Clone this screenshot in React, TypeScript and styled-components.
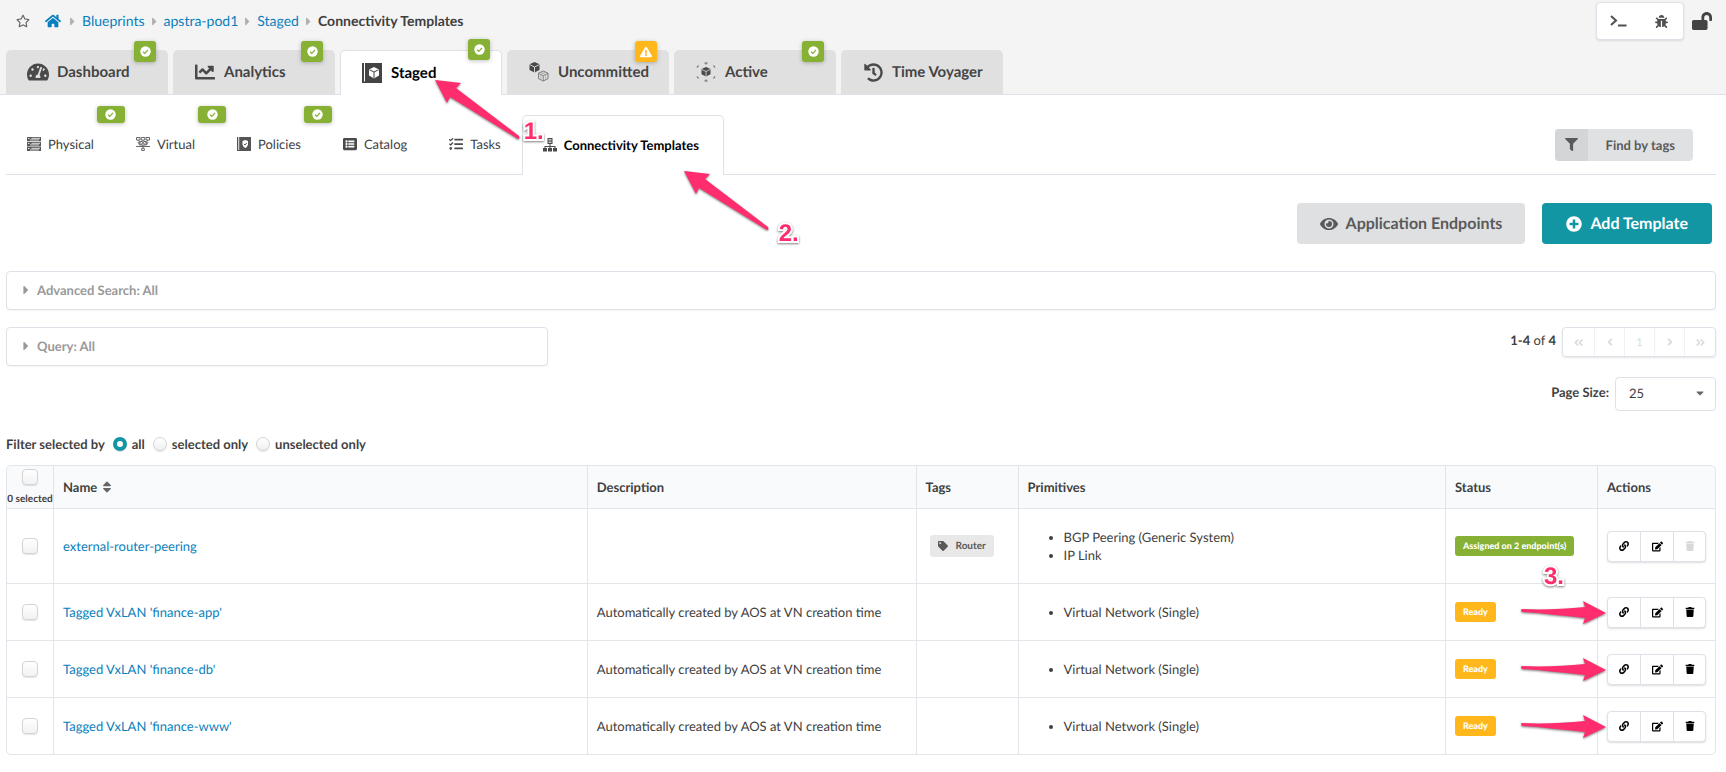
import React from "react";
import styled, { createGlobalStyle, css } from "styled-components";
import {
  FaAngleDoubleLeft,
  FaAngleDoubleRight,
  FaAngleLeft,
  FaAngleRight,
  FaBug,
  FaCaretDown,
  FaCaretRight,
  FaChartLine,
  FaEdit,
  FaExclamationTriangle,
  FaEye,
  FaFilter,
  FaHistory,
  FaHome,
  FaLink,
  FaListAlt,
  FaLockOpen,
  FaPlusCircle,
  FaRegStar,
  FaSort,
  FaTachometerAlt,
  FaTag,
  FaTasks,
  FaTrash,
} from "react-icons/fa";

const line = "#dfe1e8";
const cellLine = "#e2e5e9";
const ink = "#3f3f3f";
const link = "#0a7fbd";
const green = "#86b135";
const amber = "#ffb71b";
const teal = "#1296a4";
const pink = "#ff2d6d";

const GlobalStyle = createGlobalStyle`
  *, *::before, *::after { box-sizing: border-box; }
  body {
    margin: 0;
    background: #fff;
    color: ${ink};
    font: 13px/18px Lato, "Liberation Sans", sans-serif;
    text-rendering: geometricPrecision;
  }
  a { color: ${link}; text-decoration: none; }
  button, select { font-family: inherit; text-rendering: inherit; cursor: pointer; }
  svg { flex: none; display: block; }
`;

/* ---------- header ---------- */

const Header = styled.header`
  background: #f4f4f4;
  border-bottom: 1px solid ${line};
  padding: 2px 13px 0 6px;
`;

const TopBar = styled.div`
  display: flex;
  align-items: center;
  height: 38px;
`;

const Breadcrumb = styled.nav`
  display: flex;
  align-items: center;
  flex: 1;
  gap: 3px;
  padding-left: 10px;
  font-size: 14px;
  color: #b0b0b0;
  strong { color: ${ink}; }
`;

const StarButton = styled.button`
  border: 0;
  background: none;
  padding: 0;
  margin-right: 12px;
  color: #666;
`;

const HomeLink = styled.a`
  margin-right: 2px;
`;

const ToolGroup = styled.div`
  display: flex;
  height: 38px;
  background: #fff;
  border: 1px solid ${line};
  border-radius: 4px;
  box-shadow: 0 1px 2px rgba(34, 36, 38, 0.12);
`;

const ToolButton = styled.button`
  width: 43px;
  border: 0;
  background: none;
  padding: 0;
  display: grid;
  place-items: center;
  color: #505050;
`;

const LockButton = styled(ToolButton)`
  width: 22px;
  margin-left: 7px;
  color: #444;
`;

const MainTabs = styled.nav`
  display: flex;
  gap: 5px;
  margin-top: 10px;
`;

const MainTab = styled.a<{ $active?: boolean }>`
  position: relative;
  display: flex;
  align-items: center;
  gap: 8px;
  width: 162px;
  height: 44px;
  padding: 0 0 0 21px;
  border-radius: 5px 5px 0 0;
  background: #e0e0e0;
  color: #444;
  font-size: 15px;
  font-weight: 700;
  ${(p) =>
    p.$active &&
    css`
      height: 45px;
      margin-bottom: -1px;
      background: #fff;
      color: #000;
      border: 1px solid ${line};
      border-bottom: 0;
      padding-left: 20px;
    `}
`;

const TabText = styled.span`
  padding-bottom: 1px;
`;

const TabIcon = styled.span`
  display: grid;
  place-items: center;
  width: 22px;
  color: #4a4a4a;
`;

const Badge = styled.span<{ $warn?: boolean; $wide?: boolean; $raised?: boolean }>`
  position: absolute;
  display: grid;
  place-items: center;
  top: ${(p) => (p.$raised ? -12 : -9)}px;
  right: ${(p) => (p.$raised ? 11 : 12)}px;
  width: 22px;
  height: 21px;
  border-radius: 3px;
  background: ${(p) => (p.$warn ? amber : green)};
  color: #fff;
  box-shadow: 0 1px 4px rgba(0, 0, 0, 0.25);
  ${(p) =>
    p.$wide &&
    css`
      top: -10px;
      right: -11px;
      width: 28px;
      height: 17px;
    `}
`;

/* ---------- second level ---------- */

const Page = styled.main`
  padding: 20px 10px 16px 6px;
`;

const SubBar = styled.div`
  display: flex;
  align-items: center;
  justify-content: space-between;
  border-bottom: 1px solid ${line};
  padding-right: 23px;
`;

const SubTabs = styled.nav`
  display: flex;
  margin-bottom: -1px;
`;

const SubTab = styled.a<{ $active?: boolean }>`
  position: relative;
  display: flex;
  align-items: center;
  gap: 7px;
  height: 60px;
  padding: 0 20px 4px;
  border: 1px solid transparent;
  border-bottom: 0;
  border-radius: 5px 5px 0 0;
  color: ${ink};
  font-size: 13px;
  ${(p) =>
    p.$active &&
    css`
      padding: 0 24px 1px 20px;
      background: #fff;
      border-color: ${line};
      color: #000;
      font-weight: 700;
    `}
`;

const SubIcon = styled.span`
  display: grid;
  place-items: center;
  width: 14px;
  color: #4a4a4a;
`;

const FindButton = styled.button`
  display: flex;
  height: 32px;
  padding: 0;
  border: 0;
  border-radius: 4px;
  overflow: hidden;
  background: #e0e1e2;
  color: #5a5a5a;
  font-size: 13px;
  font-weight: 700;
  line-height: 32px;
`;

const FindIcon = styled.span`
  display: grid;
  place-items: center;
  width: 33px;
  height: 32px;
  background: #d4d5d7;
`;

const FindText = styled.span`
  padding: 0 18px;
`;

/* ---------- controls over the table ---------- */

const ButtonRow = styled.div`
  display: flex;
  justify-content: flex-end;
  gap: 17px;
  margin: 28px 4px 27px 0;
`;

const BigButton = styled.button<{ $primary?: boolean }>`
  display: flex;
  align-items: center;
  gap: 8px;
  height: 41px;
  padding: 0 ${(p) => (p.$primary ? 24 : 23)}px;
  border: 0;
  border-radius: 4px;
  background: ${(p) => (p.$primary ? teal : "#dfe0e2")};
  color: ${(p) => (p.$primary ? "#fff" : "#5a5a5a")};
  font-size: 16px;
  font-weight: 700;
`;

const Accordion = styled.button`
  display: flex;
  align-items: center;
  gap: 4px;
  width: 100%;
  height: 39px;
  padding: 0 12px 2px;
  border: 1px solid ${line};
  border-radius: 4px;
  background: #fff;
  color: #999;
  font-size: 13px;
  font-weight: 700;
  box-shadow: 0 1px 1px rgba(34, 36, 38, 0.04);
`;

const QueryRow = styled.div`
  display: flex;
  justify-content: space-between;
  align-items: flex-start;
  margin-top: 17px;
`;

const QueryBox = styled.div`
  width: 542px;
`;

const Paging = styled.div`
  display: flex;
  flex-direction: column;
  align-items: flex-end;
  gap: 20px;
`;

const PagingLine = styled.div`
  display: flex;
  align-items: center;
  gap: 6px;
  & > span, & > label { padding-bottom: 4px; }
  label { font-weight: 700; }
`;

const Pager = styled.div`
  display: flex;
  height: 30px;
  border: 1px solid ${line};
  border-radius: 4px;
  box-shadow: 0 1px 2px rgba(34, 36, 38, 0.12);
`;

const PagerButton = styled.button`
  display: grid;
  place-items: center;
  width: 30px;
  padding: 0;
  border: 0;
  background: none;
  color: #dcdcdc;
  font-size: 11px;
  & + & { border-left: 1px solid #f0f1f3; }
  &:first-child, &:last-child { width: 31px; }
`;

const SelectWrap = styled.div`
  position: relative;
  width: 101px;
  svg {
    position: absolute;
    right: 10px;
    top: 10px;
    pointer-events: none;
    color: #666;
  }
`;

const Select = styled.select`
  appearance: none;
  display: block;
  width: 100%;
  height: 34px;
  padding: 0 13px 3px;
  border: 1px solid ${line};
  border-radius: 4px;
  background: #fff;
  color: ${ink};
  font: inherit;
`;

const Filters = styled.fieldset`
  display: flex;
  align-items: center;
  gap: 8px;
  margin: 24px 0 12px;
  padding: 0;
  border: 0;
  font-weight: 700;
`;

const RadioLabel = styled.label`
  display: flex;
  align-items: center;
  gap: 5px;
`;

const Radio = styled.input`
  appearance: none;
  width: 14px;
  height: 14px;
  margin: 0;
  border: 1px solid #d4d4d5;
  border-radius: 50%;
  background: linear-gradient(#fff, #f0f0f0);
  box-shadow: 0 1px 1px rgba(34, 36, 38, 0.12);
  &:checked {
    border: 4px solid ${teal};
    background: #fff;
  }
`;

/* ---------- table ---------- */

const Table = styled.table`
  width: 100%;
  table-layout: fixed;
  border-collapse: separate;
  border-spacing: 0;
  border: 1px solid ${cellLine};
  border-radius: 5px;
  th, td {
    text-align: left;
    border-left: 1px solid ${cellLine};
  }
  th:first-child, td:first-child { border-left: 0; }
  th:first-child { border-top-left-radius: 5px; }
  th:last-child { border-top-right-radius: 5px; }
`;

const Col = styled.col<{ $w?: string }>`
  width: ${(p) => p.$w ?? "auto"};
`;

const Th = styled.th`
  height: 42px;
  padding: 0 9px;
  background: #f9fafb;
  font-weight: 700;
`;

const ThCheck = styled(Th)`
  padding: 0;
  font-size: 10px;
  line-height: 12px;
  white-space: nowrap;
`;

const CheckStack = styled.div`
  display: flex;
  flex-direction: column;
  align-items: center;
  gap: 8px;
`;

const SortButton = styled.button`
  display: flex;
  align-items: center;
  gap: 3px;
  padding: 0;
  border: 0;
  background: none;
  color: inherit;
  font: inherit;
  svg { color: #666; }
`;

const Td = styled.td<{ $flush?: boolean }>`
  position: relative;
  padding: 0 ${(p) => (p.$flush ? 0 : 9)}px;
  border-top: 1px solid ${cellLine};
`;

const Checkbox = styled.input`
  appearance: none;
  display: block;
  width: 16px;
  height: 16px;
  margin: 0 auto;
  border: 1px solid #d4d4d5;
  border-radius: 4px;
  background: linear-gradient(#fff, #f2f2f2);
  box-shadow: 0 1px 1px rgba(34, 36, 38, 0.12);
`;

const Primitives = styled.ul`
  margin: 0;
  padding: 19px 0 19px 36px;
`;

const Label = styled.span<{ $ready?: boolean }>`
  display: inline-block;
  height: 20px;
  padding: 0 8px;
  border-radius: 3px;
  background: ${(p) => (p.$ready ? amber : green)};
  color: #fff;
  font-size: 9px;
  font-weight: 900;
  line-height: 20px;
  vertical-align: middle;
`;

const Tag = styled.span`
  display: inline-flex;
  align-items: center;
  gap: 8px;
  height: 22px;
  margin-left: 4px;
  padding: 0 8px;
  border-radius: 3px;
  background: #e8e8e8;
  color: #5a5a5a;
  font-size: 10px;
  font-weight: 700;
  vertical-align: middle;
`;

const Actions = styled.div`
  display: inline-flex;
  height: 31px;
  border: 1px solid ${line};
  border-radius: 4px;
  background: #fff;
  box-shadow: 0 1px 2px rgba(34, 36, 38, 0.15);
  vertical-align: middle;
`;

const ActionButton = styled.button`
  display: grid;
  place-items: center;
  width: 32px;
  padding: 0;
  border: 0;
  background: none;
  color: #000;
  & + & { width: 33px; border-left: 1px solid ${line}; }
  & + & + & { width: 32px; }
  &:disabled { color: #d8d8d8; }
`;

/* ---------- walkthrough marks ---------- */

const Mark = styled.span<{ $x: number; $y: number }>`
  position: absolute;
  left: ${(p) => p.$x}px;
  top: ${(p) => p.$y}px;
  z-index: 5;
  pointer-events: none;
  color: ${pink};
  font: 700 24px/24px "Liberation Sans", Arial, sans-serif;
  -webkit-text-stroke: 4px #fff;
  paint-order: stroke fill;
  filter: drop-shadow(0 1px 1px rgba(0, 0, 0, 0.5));
`;

const ArrowShape = styled.svg`
  overflow: visible;
`;

const SlantArrow = () => (
  <ArrowShape width="88" height="62" viewBox="0 0 88 62" fill={pink}>
    <path d="M0 0L26 3L21 8L84 56Q85 59 83 59L15 17L12 23Z" />
  </ArrowShape>
);

const FlatArrow = () => (
  <ArrowShape width="88" height="26" viewBox="0 0 88 26" fill={pink}>
    <path d="M2 9C22 10 44 9 65 7L63 1L86 13L63 24L65 18C44 16 22 13 2 12Q0 10 2 9Z" />
  </ArrowShape>
);

/* ---------- drawn icons ---------- */

const Tick = () => (
  <svg width="11" height="11" viewBox="0 0 11 11">
    <circle cx="5.5" cy="5.5" r="5.2" fill="#fff" />
    <path d="M3 5.8L4.8 7.4L8 3.9" fill="none" stroke={green} strokeWidth="1.3" />
  </svg>
);

const TerminalIcon = () => (
  <svg width="17" height="14" viewBox="0 0 17 14" fill="none" stroke="currentColor" strokeWidth="2">
    <path d="M1 2L6 6.5L1 11M8 11.5H16.500" />
  </svg>
);

const StagedIcon = () => (
  <svg width="20" height="20" viewBox="0 0 20 20">
    <path d="M0 0H2V20H0ZM3 0H20V20H1V18.500H3Z" fill="#444" />
    <path d="M12 4L17 6.500V12.500L12 15.500L7 12.500V6.500Z" fill="#fff" />
    <path d="M7.500 6.800L12 9L16.500 6.800M12 9V15" stroke="#444" fill="none" />
  </svg>
);

const Cube = ({ x, y, s, hollow }: { x: number; y: number; s: number; hollow?: boolean }) => (
  <g transform={`translate(${x} ${y}) scale(${s})`}>
    <path
      d="M5 0L10 2.300V8L5 10.500L0 8V2.300Z"
      fill={hollow ? "none" : "#4a4a4a"}
      stroke={hollow ? "#777" : "none"}
    />
    <path d="M0 2.500L5 5L10 2.500M5 5V10.500" fill="none" stroke={hollow ? "#777" : "#e0e0e0"} strokeWidth=".9" />
    {hollow && <path d="M2.500 1.200L7.500 3.700V9M7.500 1.200L2.500 3.700V9" fill="none" stroke="#999" strokeWidth=".6" />}
  </g>
);

const UncommittedIcon = () => (
  <svg width="20" height="20" viewBox="0 0 20 20">
    <Cube x={0.5} y={0} s={1} />
    <Cube x={9.5} y={9} s={0.95} hollow />
  </svg>
);

const ActiveIcon = () => (
  <svg width="20" height="20" viewBox="0 0 20 20">
    <Cube x={5.5} y={5} s={0.9} />
    <path
      d="M8.500 1H11.500M10 1V2.500M8.500 19H11.500M10 17.500V19M1 5.500L2.500 3.500M17.500 3.500L19 5.500M1 14.500L2.500 16.500M17.500 16.500L19 14.500"
      fill="none"
      stroke="#6a6a6a"
      strokeWidth="1.2"
    />
  </svg>
);

const PhysicalIcon = () => (
  <svg width="14" height="14" viewBox="0 0 14 14">
    <path d="M0 0H14V4.200H0ZM0 5H14V9.200H0ZM0 9.800H14V14H0Z" fill="#5a5a5a" />
    <path d="M4.500 1.300H13M3 2.900H12M4.500 6.300H13M3 7.900H12M4.500 11.300H13M3 12.900H12" stroke="#fff" strokeWidth=".8" />
    <path d="M1 1.500H2.500M1 6.500H2.500M1 11.500H2.500" stroke="#fff" strokeWidth=".8" />
  </svg>
);

const VirtualIcon = () => (
  <svg width="14" height="14" viewBox="0 0 14 14" fill="none" stroke="#5a5a5a" strokeWidth=".9">
    <path d="M.5.5H4V3H.5ZM5.200.5H8.800V3H5.200ZM10 .5H13.500V3H10ZM2 3L4.500 6M12 3L9.500 6M7 3V5M2 5L3.500 8H10.500L12 5M7 8V11" />
    <circle cx="5" cy="5.800" r="1.500" />
    <circle cx="9" cy="5.800" r="1.500" />
    <path d="M5.700 11.300H8.300V13.500H5.700Z" />
    <path d="M0 9.500H14" />
  </svg>
);

const PoliciesIcon = () => (
  <svg width="14" height="14" viewBox="0 0 14 14">
    <path d="M0 0H1.300V14H0ZM2.200 0H14V14H.8V13H2.200Z" fill="#555" />
    <path d="M5.500 4L8.300 3L11 4V7.500Q10.500 10 8.300 11Q6 10 5.500 7.500Z" fill="#fff" />
    <path d="M7 7L8 8L9.700 6" stroke="#555" fill="none" />
  </svg>
);

const TemplateIcon = () => (
  <svg width="14" height="14" viewBox="0 0 14 14" fill="#4a4a4a">
    <path d="M4.500 0H9.500V6H7.500V8H12.500V10H14V13.500H10V10H11.500V9H7.500V10H9V13.500H5V10H6.500V9H2.500V10H4V13.500H0V10H1.500V8H6.500V6H4.500Z" />
    <path d="M5.500 1.500H8.500M5.500 3H8.500M5.500 4.500H8.500" stroke="#fff" strokeWidth=".7" />
  </svg>
);

/* ---------- data ---------- */

type Row = {
  name: string;
  description?: string;
  tag?: string;
  primitives: string[];
  status: string;
  ready?: boolean;
};

const created = "Automatically created by AOS at VN creation time";

const rows: Row[] = [
  {
    name: "external-router-peering",
    tag: "Router",
    primitives: ["BGP Peering (Generic System)", "IP Link"],
    status: "Assigned on 2 endpoint(s)",
  },
  ...["app", "db", "www"].map((part) => ({
    name: `Tagged VxLAN 'finance-${part}'`,
    description: created,
    primitives: ["Virtual Network (Single)"],
    status: "Ready",
    ready: true,
  })),
];

const mainTabs = [
  { text: "Dashboard", icon: <FaTachometerAlt size={22} />, badge: "ok" },
  { text: "Analytics", icon: <FaChartLine size={20} />, badge: "ok" },
  { text: "Staged", icon: <StagedIcon />, badge: "ok", active: true },
  { text: "Uncommitted", icon: <UncommittedIcon />, badge: "warn" },
  { text: "Active", icon: <ActiveIcon />, badge: "ok" },
  { text: "Time Voyager", icon: <FaHistory size={19} /> },
];

const subTabs = [
  { text: "Physical", icon: <PhysicalIcon />, badge: true },
  { text: "Virtual", icon: <VirtualIcon />, badge: true },
  { text: "Policies", icon: <PoliciesIcon />, badge: true },
  { text: "Catalog", icon: <FaListAlt size={14} /> },
  { text: "Tasks", icon: <FaTasks size={14} /> },
  { text: "Connectivity Templates", icon: <TemplateIcon />, active: true },
];

export default function App() {
  return (
    <>
      <GlobalStyle />
      <Header>
        <TopBar>
          <Breadcrumb aria-label="Breadcrumb">
            <StarButton aria-label="Favorite">
              <FaRegStar size={14} />
            </StarButton>
            <HomeLink href="#home" aria-label="Home">
              <FaHome size={16} />
            </HomeLink>
            <FaCaretRight size={13} />
            <a href="#blueprints">Blueprints</a>
            <FaCaretRight size={13} />
            <a href="#pod">apstra-pod1</a>
            <FaCaretRight size={13} />
            <a href="#staged">Staged</a>
            <FaCaretRight size={13} />
            <strong>Connectivity Templates</strong>
          </Breadcrumb>
          <ToolGroup>
            <ToolButton aria-label="Console">
              <TerminalIcon />
            </ToolButton>
            <ToolButton aria-label="Report a bug">
              <FaBug size={13} />
            </ToolButton>
          </ToolGroup>
          <LockButton aria-label="Lock">
            <FaLockOpen size={20} />
          </LockButton>
        </TopBar>
        <MainTabs aria-label="Blueprint">
          {mainTabs.map((tab) => (
            <MainTab key={tab.text} href="#tab" $active={tab.active}>
              <TabIcon>{tab.icon}</TabIcon>
              <TabText>{tab.text}</TabText>
              {tab.badge && (
                <Badge $warn={tab.badge === "warn"} $raised={tab.active}>
                  {tab.badge === "warn" ? <FaExclamationTriangle size={12} /> : <Tick />}
                </Badge>
              )}
              {tab.active && (
                <Mark $x={94} $y={29}>
                  <SlantArrow />
                </Mark>
              )}
            </MainTab>
          ))}
        </MainTabs>
      </Header>

      <Page>
        <SubBar>
          <SubTabs aria-label="Staged">
            {subTabs.map((tab) => (
              <SubTab key={tab.text} href="#section" $active={tab.active}>
                <SubIcon>{tab.icon}</SubIcon>
                {tab.text}
                {tab.badge && (
                  <Badge $wide>
                    <Tick />
                  </Badge>
                )}
                {tab.active && (
                  <>
                    <Mark $x={1} $y={4}>1.</Mark>
                    <Mark $x={161} $y={55}>
                      <SlantArrow />
                    </Mark>
                    <Mark $x={256} $y={106}>2.</Mark>
                  </>
                )}
              </SubTab>
            ))}
          </SubTabs>
          <FindButton>
            <FindIcon>
              <FaFilter size={13} />
            </FindIcon>
            <FindText>Find by tags</FindText>
          </FindButton>
        </SubBar>

        <ButtonRow>
          <BigButton>
            <FaEye size={18} />
            Application Endpoints
          </BigButton>
          <BigButton $primary>
            <FaPlusCircle size={16} />
            Add Template
          </BigButton>
        </ButtonRow>

        <Accordion>
          <FaCaretRight size={14} />
          Advanced Search: All
        </Accordion>

        <QueryRow>
          <QueryBox>
            <Accordion>
              <FaCaretRight size={14} />
              Query: All
            </Accordion>
          </QueryBox>
          <Paging>
            <PagingLine>
              <span>
                <b>1-4</b> of <b>4</b>
              </span>
              <Pager>
                <PagerButton disabled aria-label="First page">
                  <FaAngleDoubleLeft size={11} />
                </PagerButton>
                <PagerButton disabled aria-label="Previous page">
                  <FaAngleLeft size={12} />
                </PagerButton>
                <PagerButton disabled>1</PagerButton>
                <PagerButton disabled aria-label="Next page">
                  <FaAngleRight size={12} />
                </PagerButton>
                <PagerButton disabled aria-label="Last page">
                  <FaAngleDoubleRight size={11} />
                </PagerButton>
              </Pager>
            </PagingLine>
            <PagingLine>
              <label htmlFor="page-size">Page Size:</label>
              <SelectWrap>
                <Select id="page-size" defaultValue="25">
                  <option>25</option>
                  <option>50</option>
                  <option>100</option>
                </Select>
                <FaCaretDown size={12} />
              </SelectWrap>
            </PagingLine>
          </Paging>
        </QueryRow>

        <Filters>
          <span>Filter selected by</span>
          {["all", "selected only", "unselected only"].map((option) => (
            <RadioLabel key={option}>
              <Radio type="radio" name="selection" defaultChecked={option === "all"} />
              {option}
            </RadioLabel>
          ))}
        </Filters>

        <Table>
          <colgroup>
            <Col $w="46px" />
            <Col $w="31.25%" />
            <Col $w="19.25%" />
            <Col $w="102px" />
            <Col />
            <Col $w="152px" />
            <Col $w="118px" />
          </colgroup>
          <thead>
            <tr>
              <ThCheck>
                <CheckStack>
                  <Checkbox type="checkbox" aria-label="Select all" />
                  0 selected
                </CheckStack>
              </ThCheck>
              <Th>
                <SortButton>
                  Name <FaSort size={14} />
                </SortButton>
              </Th>
              <Th>Description</Th>
              <Th>Tags</Th>
              <Th>Primitives</Th>
              <Th>Status</Th>
              <Th>Actions</Th>
            </tr>
          </thead>
          <tbody>
            {rows.map((row) => (
              <tr key={row.name}>
                <Td $flush>
                  <Checkbox type="checkbox" aria-label={`Select ${row.name}`} />
                </Td>
                <Td>
                  <a href="#template">{row.name}</a>
                </Td>
                <Td>{row.description}</Td>
                <Td>
                  {row.tag && (
                    <Tag>
                      <FaTag size={10} />
                      {row.tag}
                    </Tag>
                  )}
                </Td>
                <Td>
                  <Primitives>
                    {row.primitives.map((item) => (
                      <li key={item}>{item}</li>
                    ))}
                  </Primitives>
                </Td>
                <Td>
                  <Label $ready={row.ready}>{row.status}</Label>
                  {row.ready ? (
                    <Mark $x={74} $y={16}>
                      <FlatArrow />
                    </Mark>
                  ) : (
                    <Mark $x={98} $y={56}>3.</Mark>
                  )}
                </Td>
                <Td>
                  <Actions>
                    <ActionButton aria-label="Assign">
                      <FaLink size={10} />
                    </ActionButton>
                    <ActionButton aria-label="Edit">
                      <FaEdit size={11} />
                    </ActionButton>
                    <ActionButton aria-label="Delete" disabled={!row.ready}>
                      <FaTrash size={10} />
                    </ActionButton>
                  </Actions>
                </Td>
              </tr>
            ))}
          </tbody>
        </Table>
      </Page>
    </>
  );
}
